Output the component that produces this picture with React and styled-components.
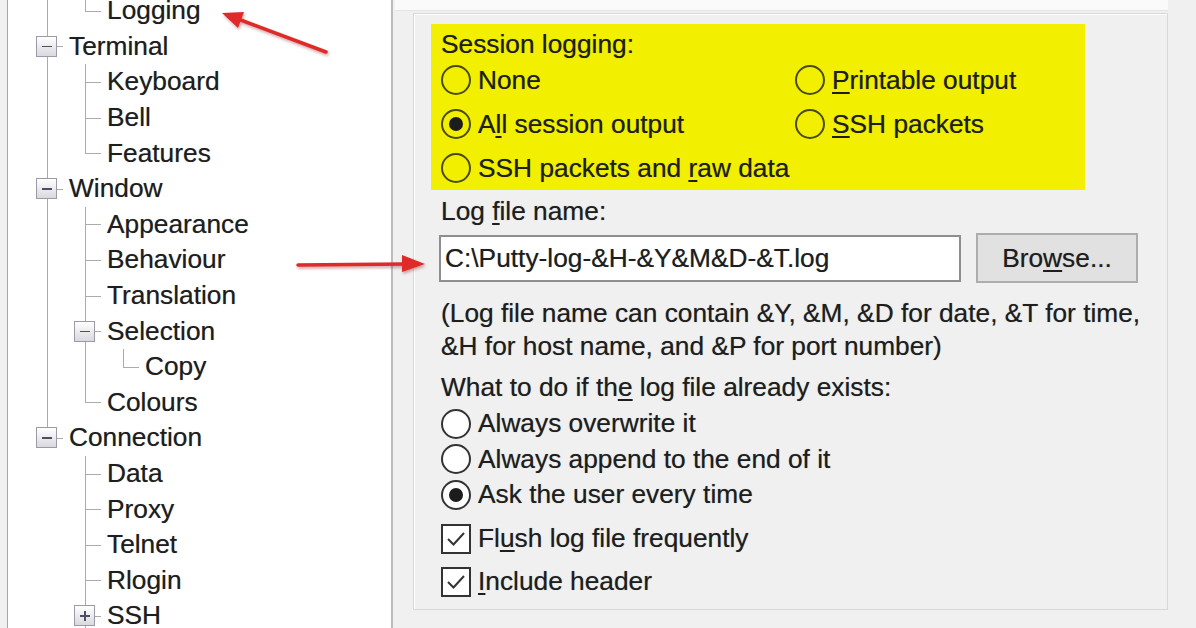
import styled, { createGlobalStyle, css } from 'styled-components'

const GlobalStyle = createGlobalStyle`
body{
  margin:0;
  font-family:'Liberation Sans', Arial, sans-serif;
}
`

const Frame = styled.div`
position:relative;
display:flex;
width:1196px;
height:628px;
overflow:hidden;
background:#f0f0f0;
color:#1e1e1e;
font-size:26.3px;
text-shadow:0 0 0.7px rgba(0,0,0,0.45);
`

const Gutter = styled.div`
width:7px;
background:#f0f0f0;
border-right:1px solid #a5a5a5;
`

// Done with frame

const TreePanel = styled.div`
width:383px;
background:#fff;
border-right:2px solid #bcbcbc;
overflow:hidden;
`

const TreeList = styled.div`
margin-top:-7px;
padding-left:20px;
`

const TreeRow = styled.div`
display:flex;
align-items:center;
height:35.6px;
`

const Guide = styled.div`
position:relative;
width:38px;
height:100%;
display:flex;
align-items:center;
justify-content:flex-start;
padding-left:9px;
box-sizing:border-box;

&::before{
  content:'';
  position:absolute;
  left:19px;
  top:0;
  width:1px;
  background:#ababab;
  ${p => p.$v === 'full' && css`height:100%;`}
  ${p => p.$v === 'top' && css`height:50%;`}
  ${p => p.$v === 'none' && css`display:none;`}
}

&::after{
  content:'';
  position:absolute;
  left:19px;
  top:50%;
  width:16px;
  height:1px;
  background:#ababab;
  display:${p => (p.$h ? 'block' : 'none')};
}
`

const ExpandBox = styled.div`
position:relative;
z-index:1;
width:21px;
height:21px;
margin-left:-1px;
box-sizing:border-box;
border:1px solid #9a9aa8;
background:linear-gradient(#ffffff, #d9d9de);

&::before{
  content:'';
  position:absolute;
  left:4.5px;
  top:9px;
  width:10px;
  height:1.5px;
  background:#4d4d66;
}

&::after{
  content:'';
  position:absolute;
  left:9px;
  top:4.5px;
  width:1.5px;
  height:10px;
  background:#4d4d66;
  display:${p => (p.$plus ? 'block' : 'none')};
}
`

const NodeLabel = styled.span`
padding-left:3px;
white-space:nowrap;
`

// Done with tree

const Pane = styled.div`
flex:1;
display:flex;
flex-direction:column;
padding-right:28px;
`

const TopStrip = styled.div`
height:10px;
margin-left:2px;
background:#fafafa;
border-bottom:1px solid #e4e4e4;
`

const GroupBox = styled.div`
margin:2px 0 0 20px;
height:597px;
box-sizing:border-box;
border:1px solid #d8d8d8;
box-shadow:inset 1px 1px 0 #fff;
padding:10px 0 0 17px;
`

const Highlight = styled.div`
width:654px;
box-sizing:border-box;
background:#f2f000;
padding:6px 0 0 10px;
`

const Heading = styled.div`
height:28px;
line-height:28px;
`

const RadioGrid = styled.div`
display:grid;
grid-template-columns:354px 1fr;
grid-auto-rows:44px;
align-items:center;
`

const Option = styled.label`
display:flex;
align-items:center;
gap:7px;
height:${p => p.$h || 'auto'};
white-space:nowrap;
`

const Radio = styled.span`
position:relative;
width:30px;
height:30px;
flex:none;
box-sizing:border-box;
border-radius:50%;
border:2px solid ${p => (p.$onYellow ? '#4a4a10' : '#333')};
background:${p => (p.$onYellow ? 'transparent' : '#fff')};

&::after{
  content:'';
  position:absolute;
  left:6px;
  top:6px;
  width:14px;
  height:14px;
  border-radius:50%;
  background:#1c1c1c;
  display:${p => (p.$checked ? 'block' : 'none')};
}
`

const Check = styled.span`
display:flex;
align-items:center;
justify-content:center;
width:30px;
height:30px;
flex:none;
box-sizing:border-box;
border:2px solid #333;
background:#fff;
`

const U = styled.span`
text-decoration:underline;
text-underline-offset:3px;
text-decoration-thickness:1.5px;
`

const Body = styled.div`
padding-left:10px;
`

const Line = styled.div`
line-height:${p => p.$lh || '35px'};
margin-top:${p => p.$mt || '0px'};
white-space:nowrap;
`

const InputRow = styled.div`
display:flex;
align-items:center;
gap:15px;
height:50px;
margin:4px 0 0 -2px;
`

const TextBox = styled.div`
width:522px;
height:47px;
box-sizing:border-box;
border:2px solid #8e8e8e;
background:#fff;
padding-left:4px;
display:flex;
align-items:center;
white-space:nowrap;
`

const Button = styled.button`
width:162px;
height:50px;
background:#e1e1e1;
border:2px solid #adadad;
font-family:inherit;
font-size:26.3px;
color:#1e1e1e;
text-shadow:inherit;
padding:0;
`

const Note = styled.div`
margin-top:14px;
line-height:33px;
white-space:nowrap;
`

const Stack = styled.div`
margin-top:${p => p.$mt};
display:flex;
flex-direction:column;
`

const Arrows = styled.svg`
position:absolute;
left:0;
top:0;
pointer-events:none;
filter:drop-shadow(1px 2px 1.5px rgba(120,0,0,0.35));
`

// Done with parts

const tree = [
  { label: 'Logging', cells: [{ v: 'full' }, { v: 'top', h: true }] },
  { label: 'Terminal', cells: [{ v: 'full', h: true, box: 'minus' }] },
  { label: 'Keyboard', cells: [{ v: 'full' }, { v: 'full', h: true }] },
  { label: 'Bell', cells: [{ v: 'full' }, { v: 'full', h: true }] },
  { label: 'Features', cells: [{ v: 'full' }, { v: 'top', h: true }] },
  { label: 'Window', cells: [{ v: 'full', h: true, box: 'minus' }] },
  { label: 'Appearance', cells: [{ v: 'full' }, { v: 'full', h: true }] },
  { label: 'Behaviour', cells: [{ v: 'full' }, { v: 'full', h: true }] },
  { label: 'Translation', cells: [{ v: 'full' }, { v: 'full', h: true }] },
  { label: 'Selection', cells: [{ v: 'full' }, { v: 'full', h: true, box: 'minus' }] },
  { label: 'Copy', cells: [{ v: 'full' }, { v: 'full' }, { v: 'top', h: true }] },
  { label: 'Colours', cells: [{ v: 'full' }, { v: 'top', h: true }] },
  { label: 'Connection', cells: [{ v: 'top', h: true, box: 'minus' }] },
  { label: 'Data', cells: [{ v: 'none' }, { v: 'full', h: true }] },
  { label: 'Proxy', cells: [{ v: 'none' }, { v: 'full', h: true }] },
  { label: 'Telnet', cells: [{ v: 'none' }, { v: 'full', h: true }] },
  { label: 'Rlogin', cells: [{ v: 'none' }, { v: 'full', h: true }] },
  { label: 'SSH', cells: [{ v: 'none' }, { v: 'full', h: true, box: 'plus' }] },
]

function CheckMark(){
  return(
    <svg width="22" height="22" viewBox="0 0 22 22">
      <polyline points="3,11 8.5,16.5 19,5" fill="none" stroke="#333" strokeWidth="2" />
    </svg>
  )
}

export default function App(){
  return(
 <Frame>
  <GlobalStyle />
  <Gutter />
  <TreePanel>
    <TreeList>
      {tree.map(node => (
        <TreeRow key={node.label}>
          {node.cells.map((c, i) => (
            <Guide key={i} $v={c.v} $h={c.h}>
              {c.box && <ExpandBox $plus={c.box === 'plus'} />}
            </Guide>
          ))}
          <NodeLabel>{node.label}</NodeLabel>
        </TreeRow>
      ))}
    </TreeList>
  </TreePanel>
  <Pane>
    <TopStrip />
    <GroupBox>
      <Highlight>
        <Heading>Session logging:</Heading>
        <RadioGrid>
          <Option><Radio $onYellow />None</Option>
          <Option><Radio $onYellow /><span><U>P</U>rintable output</span></Option>
          <Option><Radio $onYellow $checked /><span>A<U>l</U>l session output</span></Option>
          <Option><Radio $onYellow /><span><U>S</U>SH packets</span></Option>
          <Option><Radio $onYellow /><span>SSH packets and <U>r</U>aw data</span></Option>
        </RadioGrid>
      </Highlight>
      <Body>
        <Line $mt="4px">Log <U>f</U>ile name:</Line>
        <InputRow>
          <TextBox>C:\Putty-log-&amp;H-&amp;Y&amp;M&amp;D-&amp;T.log</TextBox>
          <Button>Bro<U>w</U>se...</Button>
        </InputRow>
        <Note>
          (Log file name can contain &amp;Y, &amp;M, &amp;D for date, &amp;T for time,<br />
          &amp;H for host name, and &amp;P for port number)
        </Note>
        <Line $mt="7px">What to do if th<U>e</U> log file already exists:</Line>
        <Stack $mt="1px">
          <Option $h="35.5px"><Radio />Always overwrite it</Option>
          <Option $h="35.5px"><Radio />Always append to the end of it</Option>
          <Option $h="35.5px"><Radio $checked />Ask the user every time</Option>
        </Stack>
        <Stack $mt="4.5px">
          <Option $h="43px"><Check><CheckMark /></Check><span>Fl<U>u</U>sh log file frequently</span></Option>
          <Option $h="43px"><Check><CheckMark /></Check><span><U>I</U>nclude header</span></Option>
        </Stack>
      </Body>
    </GroupBox>
  </Pane>
  <Arrows width="1196" height="628" viewBox="0 0 1196 628">
    <line x1="326" y1="52" x2="238" y2="19" stroke="#e02a2a" strokeWidth="3.5" strokeLinecap="round" />
    <polygon points="222,13 244,12 238,28" fill="#e02a2a" />
    <line x1="298" y1="265" x2="406" y2="264" stroke="#e02a2a" strokeWidth="3.5" strokeLinecap="round" />
    <polygon points="425,264 402,255 402,272" fill="#e02a2a" />
  </Arrows>
 </Frame>
  )
}
